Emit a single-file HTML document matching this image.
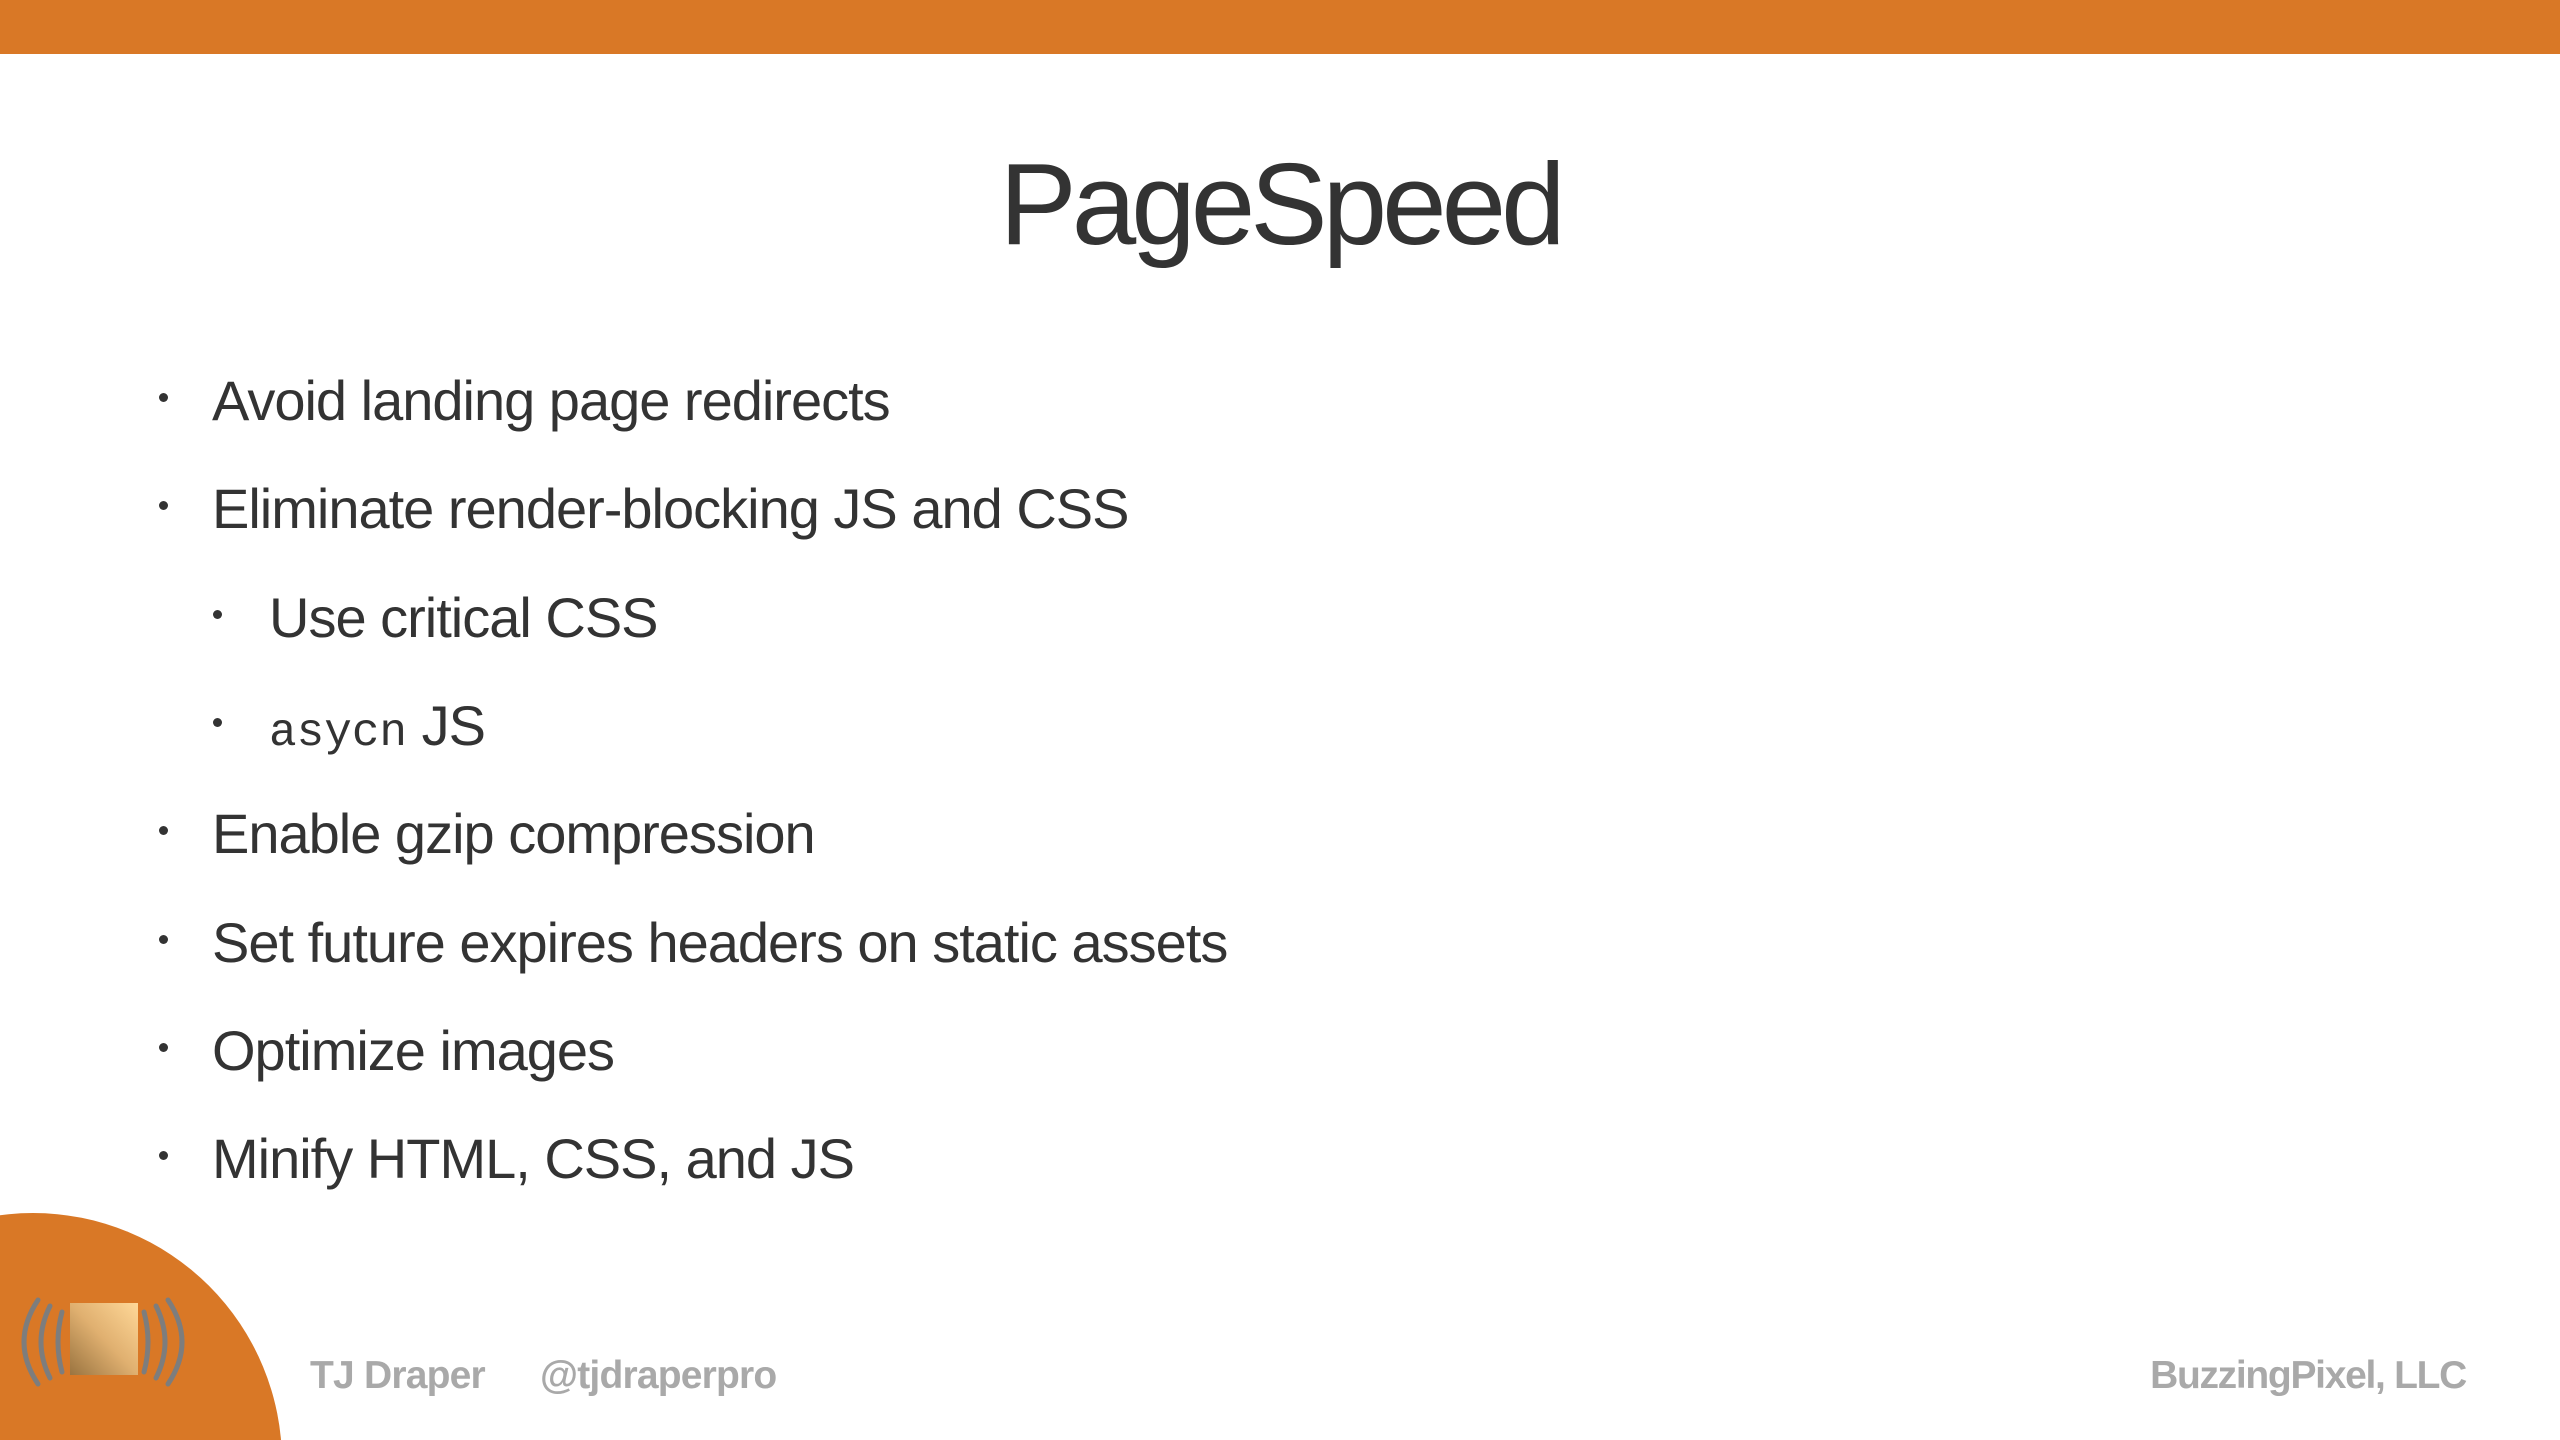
<!DOCTYPE html>
<html><head><meta charset="utf-8"><style>
html,body{margin:0;padding:0;overflow:hidden;width:2560px;height:1440px}
#wrap{width:2560px;height:1440px;position:relative;overflow:hidden;background:#fff;font-family:"Liberation Sans",sans-serif;color:#333}
.bar{position:absolute;left:0;top:0;width:2560px;height:54px;background:#D97826}
.title{position:absolute;left:0;width:2560px;top:134px;text-align:center;font-size:116px;line-height:140px;color:#333;letter-spacing:-5px}
.li{position:absolute;font-size:56px;line-height:70px;white-space:nowrap;color:#333;letter-spacing:-1px}
.dot{position:absolute;width:9px;height:9px;border-radius:50%;background:#333}
.mono{font-family:"Liberation Mono",monospace;font-size:46px;letter-spacing:0}
.foot{position:absolute;font-size:39px;font-weight:bold;color:#a9a9a9;white-space:nowrap;letter-spacing:-0.8px}
</style></head><body><div id="wrap">
<div class="bar"></div>
<div class="title">PageSpeed</div>

<div class="dot" style="left:159px;top:393px"></div><div class="li" style="left:212px;top:366px">Avoid landing page redirects</div>
<div class="dot" style="left:159px;top:501px"></div><div class="li" style="left:212px;top:474px">Eliminate render-blocking JS and CSS</div>
<div class="dot" style="left:213px;top:610px"></div><div class="li" style="left:269px;top:583px">Use critical CSS</div>
<div class="dot" style="left:213px;top:718px"></div><div class="li" style="left:269px;top:691px"><span class="mono">asycn</span> JS</div>
<div class="dot" style="left:159px;top:826px"></div><div class="li" style="left:212px;top:799px">Enable gzip compression</div>
<div class="dot" style="left:159px;top:935px"></div><div class="li" style="left:212px;top:908px">Set future expires headers on static assets</div>
<div class="dot" style="left:159px;top:1043px"></div><div class="li" style="left:212px;top:1016px">Optimize images</div>
<div class="dot" style="left:159px;top:1151px"></div><div class="li" style="left:212px;top:1124px">Minify HTML, CSS, and JS</div>

<svg style="position:absolute;left:0;top:1213px" width="300" height="227" viewBox="0 0 300 227"><circle cx="33" cy="249" r="249" fill="#D97826"/></svg>
<svg style="position:absolute;left:0;top:1280px" width="200" height="130" viewBox="0 0 200 130">
<defs><linearGradient id="g" x1="0" y1="1" x2="1" y2="0"><stop offset="0" stop-color="#9a7440"/><stop offset="0.5" stop-color="#e0b070"/><stop offset="1" stop-color="#ffd898"/></linearGradient></defs>
<g fill="none" stroke="#7d7d7d" stroke-width="5" stroke-linecap="round">
<path d="M38 20 Q10 62 38 104"/><path d="M50 26 Q32 62 50 98"/><path d="M62 32 Q54 62 62 92"/>
<path d="M168 20 Q196 62 168 104"/><path d="M156 26 Q174 62 156 98"/><path d="M144 32 Q152 62 144 92"/>
</g>
<rect x="70" y="23" width="68" height="72" fill="url(#g)"/>
</svg>
<div class="foot" style="left:310px;top:1354px">TJ Draper</div>
<div class="foot" style="left:540px;top:1354px">@tjdraperpro</div>
<div class="foot" style="right:94px;top:1354px;letter-spacing:-1.3px">BuzzingPixel, LLC</div>
</div></body></html>
